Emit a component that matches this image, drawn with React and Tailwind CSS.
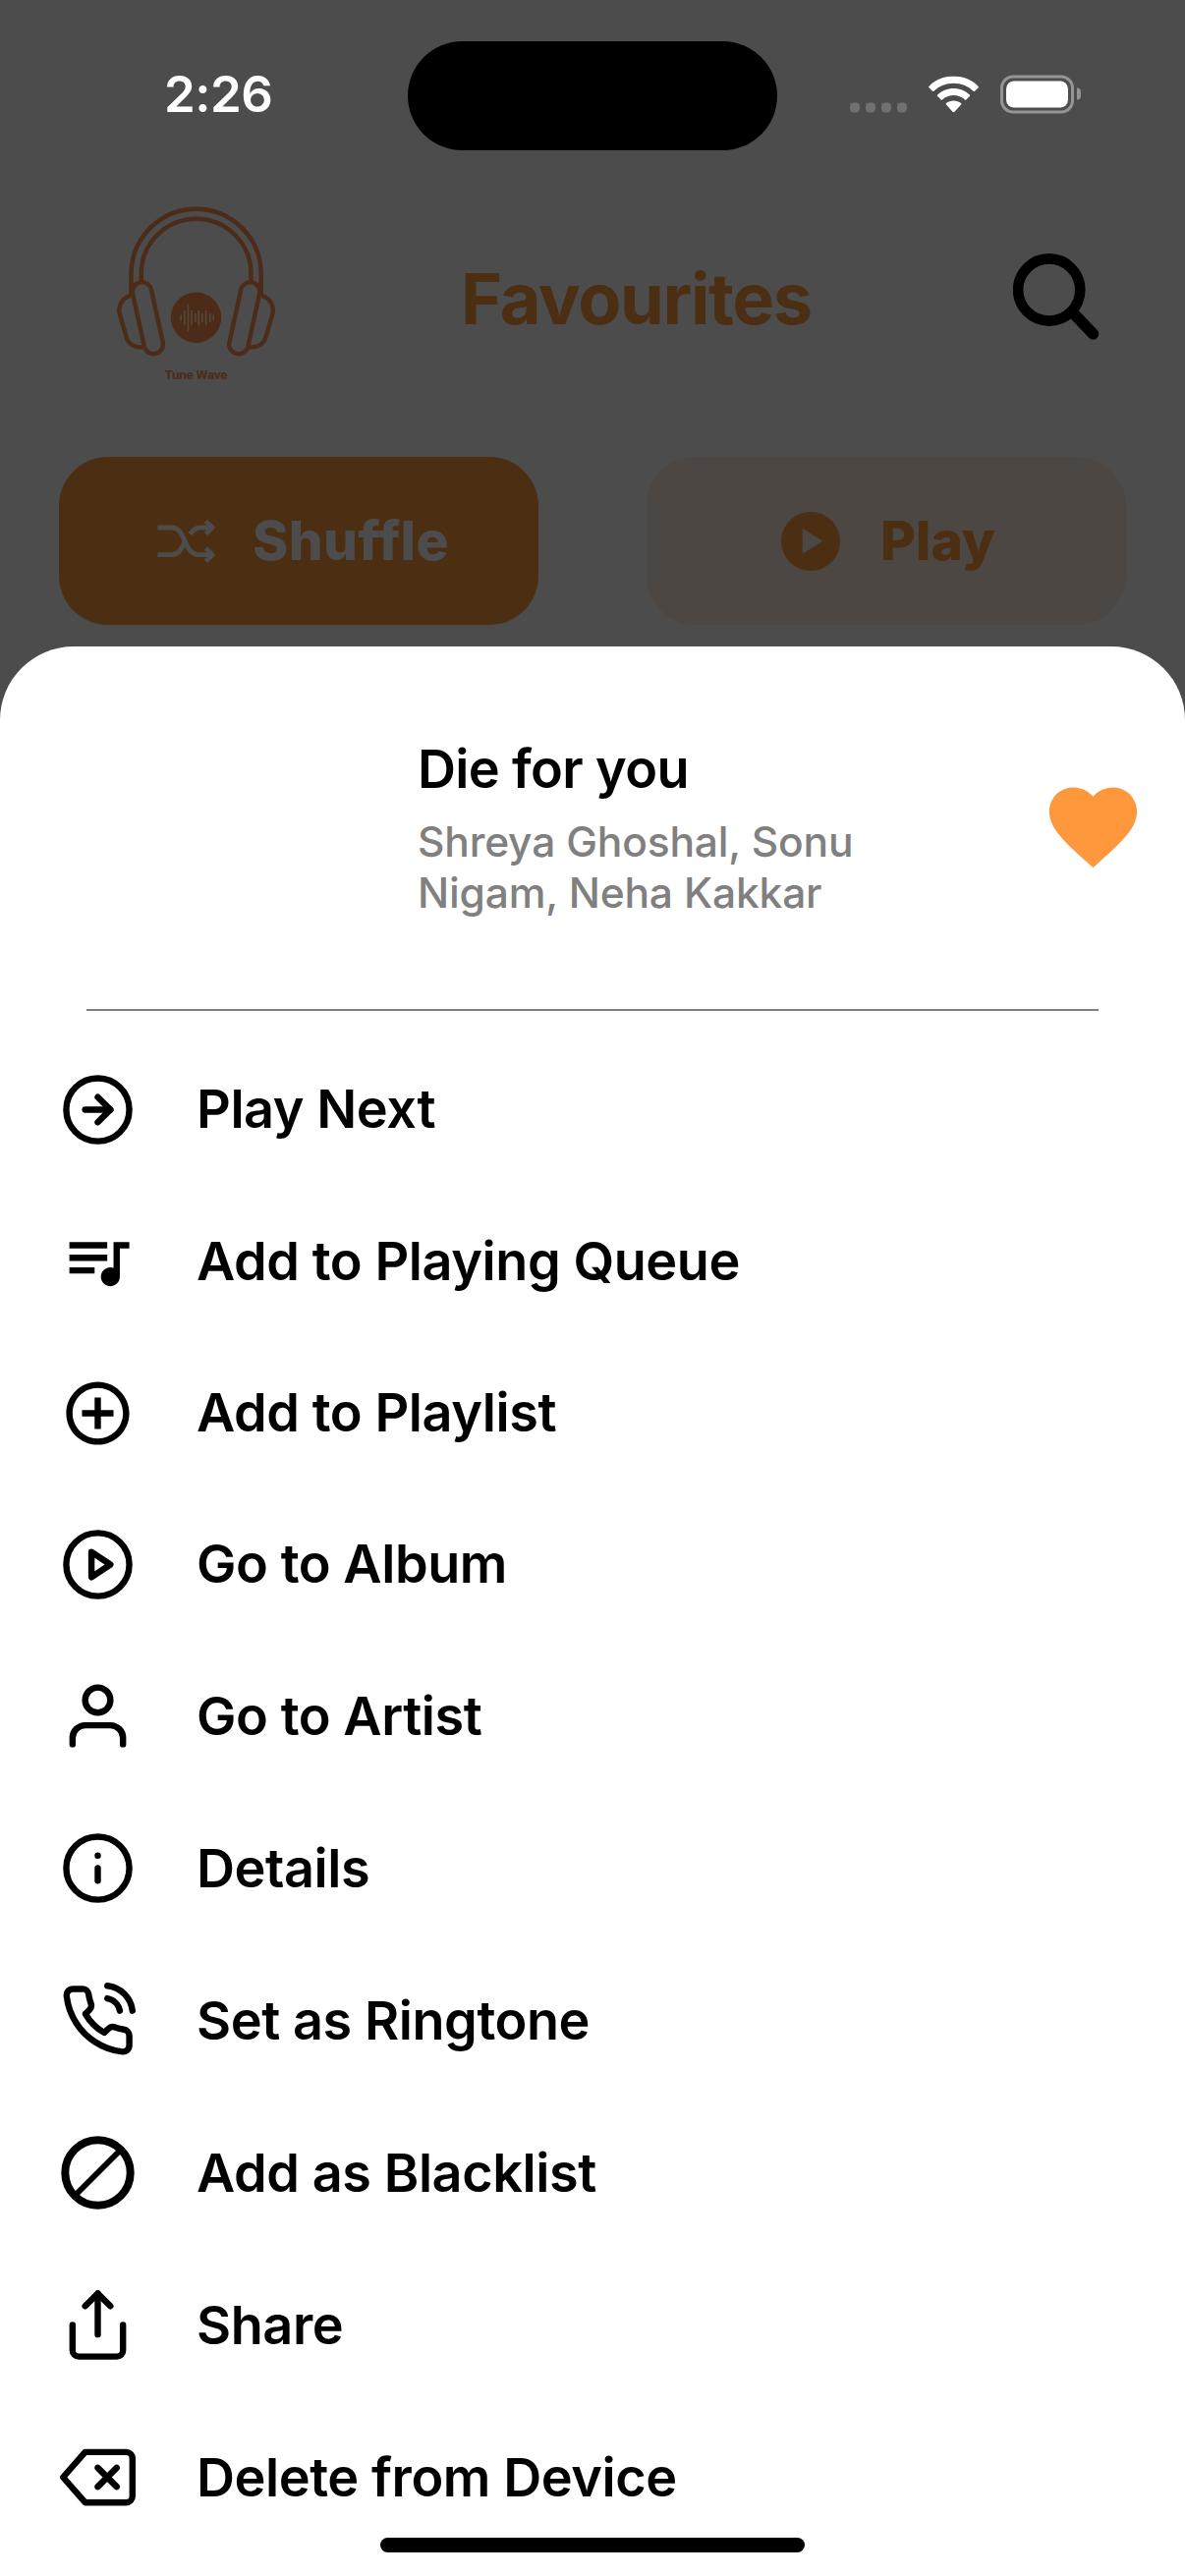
import React from "react";
import {
  FiArrowRightCircle,
  FiPlayCircle,
  FiUser,
  FiInfo,
  FiPhoneCall,
  FiShare,
  FiDelete,
} from "react-icons/fi";
import { MdQueueMusic, MdAddCircleOutline, MdFavorite } from "react-icons/md";

function BlockIcon({ className }) {
  return (
    <svg viewBox="0 0 77 77" className={className} fill="none" stroke="currentColor">
      <circle cx="38.5" cy="38.5" r="33.2" strokeWidth="8" />
      <path d="M16.5 60.5 L60.5 16.5" strokeWidth="6" />
    </svg>
  );
}

const menu = [
  { label: "Play Next", Icon: FiArrowRightCircle, height: "h-[154px]" },
  { label: "Add to Playing Queue", Icon: MdQueueMusic, height: "h-[155px]" },
  { label: "Add to Playlist", Icon: MdAddCircleOutline, height: "h-[154px]" },
  { label: "Go to Album", Icon: FiPlayCircle, height: "h-[154px]" },
  { label: "Go to Artist", Icon: FiUser, height: "h-[155px]" },
  { label: "Details", Icon: FiInfo, height: "h-[155px]" },
  { label: "Set as Ringtone", Icon: FiPhoneCall, height: "h-[155px]" },
  { label: "Add as Blacklist", Icon: BlockIcon, height: "h-[155px]" },
  { label: "Share", Icon: FiShare, height: "h-[155px]" },
  { label: "Delete from Device", Icon: FiDelete, height: "h-[155px]" },
];

function StatusBar() {
  return (
    <div className="flex h-[194px] items-center text-white">
      <div className="w-[415px] pb-[4px] pl-[167px] text-[51px] leading-none font-semibold tracking-[-0.01em]">
        2:26
      </div>
      <div className="h-[111px] w-[376px] rounded-full bg-black" />
      <div className="flex h-[39px] flex-1 -translate-y-[1.5px] items-center pl-[74px]">
        <div className="flex h-[37px] items-end gap-[6px]">
          {[0, 1, 2, 3].map((i) => (
            <span key={i} className="h-[10px] w-[10px] rounded-[4px] bg-[#707070]" />
          ))}
        </div>
        <svg viewBox="0 0 51 37" className="ml-[22px] h-[37px] w-[51px]" fill="currentColor">
          <path d="M25.5 0 C35.5 0 44.5 4 50.6 10.4 C51 10.8 51 11.3 50.6 11.7 L47 15.2 C46.6 15.6 46 15.6 45.6 15.2 C40.3 10.2 33.2 7.3 25.5 7.3 C17.8 7.3 10.7 10.2 5.4 15.2 C5 15.6 4.4 15.6 4 15.2 L0.4 11.7 C0 11.3 0 10.8 0.4 10.4 C6.5 4 15.5 0 25.5 0Z" />
          <path d="M25.5 12.4 C31.9 12.4 37.7 14.9 42 19 C42.4 19.4 42.4 19.9 42 20.3 L38.3 23.9 C37.9 24.3 37.4 24.3 37 23.9 C33.9 21.2 29.9 19.6 25.5 19.6 C21.1 19.6 17.1 21.2 14 23.9 C13.6 24.3 13.1 24.3 12.7 23.9 L9 20.3 C8.6 19.9 8.6 19.4 9 19 C13.3 14.9 19.1 12.4 25.5 12.4Z" />
          <path d="M25.5 24.9 C28.4 24.9 31 25.9 33.1 27.6 C33.5 28 33.5 28.6 33.1 29 L26.3 36.4 C25.8 36.9 25.2 36.9 24.7 36.4 L17.9 29 C17.5 28.6 17.5 28 17.9 27.6 C20 25.9 22.6 24.9 25.5 24.9Z" />
        </svg>
        <div className="ml-[22px] h-[39px] w-[75px] rounded-[13px] border-[3px] border-[#949494] p-[3px]">
          <div className="h-full w-full rounded-[8px] bg-white" />
        </div>
        <div className="ml-[3px] h-[12px] w-[4px] rounded-r-full bg-[#949494]" />
      </div>
    </div>
  );
}

function HeadphoneHalf() {
  return (
    <>
      <rect
        x="140.7"
        y="286.6"
        width="19.4"
        height="74.2"
        rx="9.7"
        transform="rotate(-12.4 150.4 323.7)"
      />
      <path d="M132.5 301 C124.5 303.5 119.8 311 121.8 319.5 L128.6 343 C130.5 350 137 354.3 146.5 353.2" />
    </>
  );
}

const wave = [
  [184.2, 2.5],
  [187.7, 7],
  [191.5, 13],
  [195, 7],
  [198.8, 4],
  [202.3, 7],
  [205.8, 4],
  [209.6, 7],
  [213.8, 4],
  [217.3, 2.5],
];

function Logo() {
  return (
    <svg viewBox="119 209 162 180" className="h-[180px] w-[162px]">
      <g fill="none" stroke="#4c2b18" strokeWidth="4.4">
        <path d="M133.5 301 V279 A66.1 66.3 0 0 1 265.7 279 V301" />
        <path d="M143.8 287 V278.4 A55.8 55.7 0 0 1 255.4 278.4 V287" />
        <HeadphoneHalf />
        <g transform="translate(399.2 0) scale(-1 1)">
          <HeadphoneHalf />
        </g>
      </g>
      <circle cx="199.5" cy="323.2" r="25.7" fill="#4c2b18" />
      <g stroke="#55473c" strokeWidth="1.6" strokeLinecap="round">
        {wave.map(([x, h]) => (
          <line key={x} x1={x} x2={x} y1={323.5 - h} y2={323.5 + h} />
        ))}
      </g>
      <text
        x="167.5"
        y="386"
        textLength="64"
        fill="#4c2b18"
        fontFamily="Roboto, sans-serif"
        className="text-[13.6px] font-bold"
      >
        Tune Wave
      </text>
    </svg>
  );
}

function Header() {
  return (
    <div className="flex h-[218px] items-center">
      <div className="ml-[119px] pb-[8px]">
        <Logo />
      </div>
      <h1 className="ml-[188px] w-[562px] pt-[1px] text-[72px] leading-none font-bold tracking-[-0.0195em] text-[#4c2e13]">
        Favourites
      </h1>
      <svg
        viewBox="1031 257 88 90"
        className="mb-[2px] h-[90px] w-[88px]"
        fill="none"
        stroke="#000"
        strokeLinecap="round"
      >
        <circle cx="1067.7" cy="295" r="31.6" strokeWidth="10.6" />
        <path d="M1092 318.5 L1112.6 340" strokeWidth="11.4" />
      </svg>
    </div>
  );
}

function Actions() {
  return (
    <div className="mt-[53px] flex justify-between px-[60px] text-[55px] leading-none font-extrabold">
      <div className="flex h-[171px] w-[488px] items-center rounded-[50px] bg-[#4c2e13] pl-[100px] text-[#4c4c4c]">
        <svg
          viewBox="160 528 60 46"
          className="h-[46px] w-[60px]"
          fill="none"
          stroke="currentColor"
          strokeWidth="4.8"
        >
          <path d="M160.4 537 H175 C183 537 185.5 545 188 550.5 C191 557.5 194 564.7 203 564.7 H214" />
          <path d="M160.4 564.7 H175 C182 564.7 185 558 187.8 551.5" />
          <path d="M193.5 543.8 C196 539.6 199 537 204 537 H214" />
          <path d="M209.5 530.3 L216 537 L209.5 543.7" />
          <path d="M209.5 558 L216 564.7 L209.5 571.4" />
        </svg>
        <span className="ml-[37px] tracking-[0.006em]">Shuffle</span>
      </div>
      <div className="flex h-[171px] w-[488px] items-center rounded-[50px] bg-[#4c4743] pl-[137px] text-[#4c2e13]">
        <svg viewBox="0 0 60 60" className="h-[60px] w-[60px]">
          <circle cx="30" cy="30" r="30" fill="currentColor" />
          <path d="M21.6 16.8 L42.4 29.8 L21.6 42.8Z" fill="#4c4743" />
        </svg>
        <span className="ml-[41px]">Play</span>
      </div>
    </div>
  );
}

function Sheet() {
  return (
    <div className="flex-1 rounded-t-[75px] bg-white text-black">
      <div className="flex h-[369px] items-center">
        <div className="ml-[425px] w-[500px]">
          <div className="text-[54px] leading-[64px] font-semibold tracking-[-0.012em]">
            Die for you
          </div>
          <div className="mt-[16px] text-[42.5px] leading-[52px] font-medium tracking-[-0.004em] text-[#808080]">
            Shreya Ghoshal, Sonu
            <br />
            Nigam, Neha Kakkar
          </div>
        </div>
        <MdFavorite className="mb-[2px] ml-[134px] h-[107px] w-[107px] text-[#ff983d]" />
      </div>
      <div className="mx-[88px] h-[2px] bg-[#808080]" />
      <div className="mt-[23px]">
        {menu.map(({ label, Icon, height }) => (
          <div key={label} className={"flex items-center gap-[62px] pl-[61px] " + height}>
            <Icon className="h-[77px] w-[77px] shrink-0" />
            <span className="text-[54px] leading-none font-semibold tracking-[-0.008em]">
              {label}
            </span>
          </div>
        ))}
      </div>
    </div>
  );
}

export default function App() {
  return (
    <div className="relative flex h-[2622px] w-[1206px] flex-col overflow-hidden bg-[#4c4c4c] font-[Inter,sans-serif]">
      <div className="h-[658px] shrink-0">
        <StatusBar />
        <Header />
        <Actions />
      </div>
      <Sheet />
      <div className="absolute bottom-6 left-[387px] h-[15px] w-[432px] rounded-full bg-black" />
    </div>
  );
}
